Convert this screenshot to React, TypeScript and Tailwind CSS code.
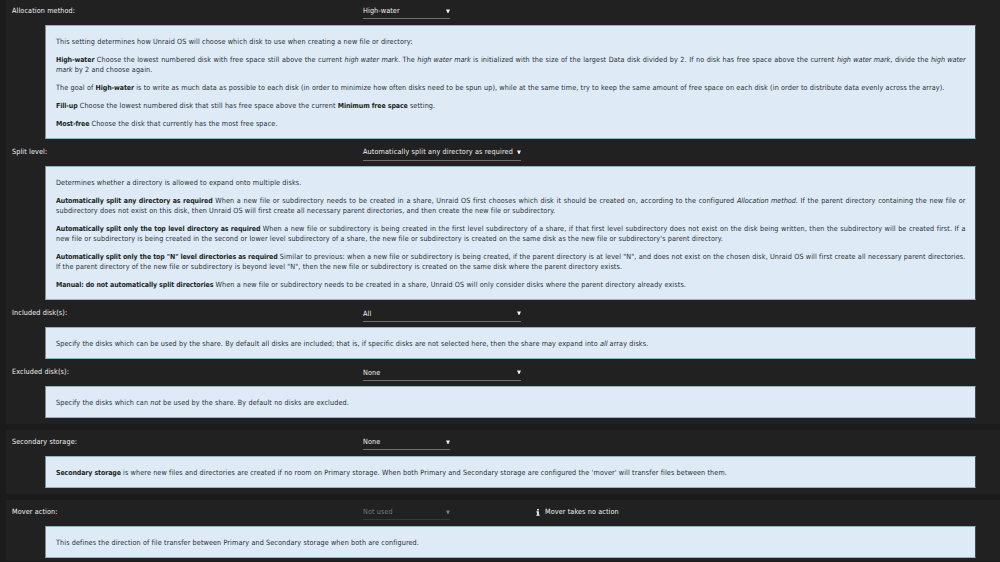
import type { ReactNode } from 'react';
import clsx from 'clsx';

type FieldProps = {
  label: string;
  value: string;
  wide?: boolean;
  disabled?: boolean;
  note?: string;
  rowClass: string;
  selectClass?: string;
  valueClass?: string;
  helpClass: string;
  children: ReactNode;
};

function Caret() {
  return (
    <svg width="4" height="5" viewBox="0 0 4 5" className="shrink-0 fill-current">
      <path d="M0 0.5h4L2.4 4h-0.8z" />
    </svg>
  );
}

function InfoIcon() {
  return (
    <svg width="4" height="7" viewBox="0 0 4 7" className="shrink-0 fill-current">
      <path d="M1.1 0h1.8v1.5H1.1zM0.4 2.3h2.5v3.4h0.8v1.1H0.3V5.7h0.8V3.4H0.4z" />
    </svg>
  );
}

function Field({ label, value, wide, disabled, note, rowClass, selectClass, valueClass, helpClass, children }: FieldProps) {
  return (
    <section>
      <div className={clsx('flex whitespace-nowrap pl-1.5 text-[#f2f2f2]', rowClass)}>
        <span className="w-[351px] shrink-0">{label}</span>
        <div
          className={clsx(
            'flex shrink-0 justify-between border-b',
            wide ? 'w-[158px]' : 'w-[87px]',
            disabled ? 'border-[#383838] text-[#7a7a7a]' : 'border-[#707070]',
            selectClass ?? 'h-3.5',
          )}
        >
          <span className={valueClass}>{value}</span>
          <span className="flex h-2.5 w-1 items-center">
            <Caret />
          </span>
        </div>
        {note && (
          <span className="ml-[86px] flex h-2.5 items-center gap-[5px]">
            <InfoIcon />
            {note}
          </span>
        )}
      </div>
      <div
        className={clsx(
          'ml-[39px] w-[931px] space-y-2 border border-y-[#93b3bd] border-l-[#7c8b92] border-r-[#3f4a50] bg-[#deebf7] pl-2.5 pr-[9.5px] pt-[10.6px] text-justify text-[#262b30]',
          helpClass,
        )}
      >
        {children}
      </div>
    </section>
  );
}

const B = ({ children }: { children: ReactNode }) => (
  <strong className="text-[7px] font-bold tracking-[-0.11px] text-[#1c1f22]">{children}</strong>
);

const I = ({ children }: { children: ReactNode }) => <em className="tracking-[-0.03px]">{children}</em>;

export default function App() {
  return (
    <main className="h-[562px] w-[1000px] overflow-hidden bg-[#1b1b1b] pl-1.5 font-['DejaVu_Sans_Condensed','DejaVu_Sans',sans-serif] text-[7.2px] leading-[10.1px] tracking-[0.11px]">
      <div className="h-[424px] bg-[#212121]">
        <Field label="Allocation method:" value="High-water" rowClass="h-[25px] pt-1.5" selectClass="h-[13px]" helpClass="h-[114px]">
          <p>This setting determines how Unraid OS will choose which disk to use when creating a new file or directory:</p>
          <p>
            <B>High-water</B> Choose the lowest numbered disk with free space still above the current <I>high water mark</I>. The <I>high water mark</I> is initialized with the size of the largest Data disk divided by 2. If no disk has free space above the current <I>high water mark</I>, divide the <I>high water mark</I> by 2 and choose again.
          </p>
          <p>
            The goal of <B>High-water</B> is to write as much data as possible to each disk (in order to minimize how often disks need to be spun up), while at the same time, try to keep the same amount of free space on each disk (in order to distribute data evenly across the array).
          </p>
          <p>
            <B>Fill-up</B> Choose the lowest numbered disk that still has free space above the current <B>Minimum free space</B> setting.
          </p>
          <p>
            <B>Most-free</B> Choose the disk that currently has the most free space.
          </p>
        </Field>

        <Field
          label="Split level:"
          value="Automatically split any directory as required"
          wide
          rowClass="h-[27px] pt-2"
          valueClass="tracking-[0.14px]"
          helpClass="h-[134px]"
        >
          <p>Determines whether a directory is allowed to expand onto multiple disks.</p>
          <p>
            <B>Automatically split any directory as required</B> When a new file or subdirectory needs to be created in a share, Unraid OS first chooses which disk it should be created on, according to the configured <I>Allocation method</I>. If the parent directory containing the new file or subdirectory does not exist on this disk, then Unraid OS will first create all necessary parent directories, and then create the new file or subdirectory.
          </p>
          <p>
            <B>Automatically split only the top level directory as required</B> When a new file or subdirectory is being created in the first level subdirectory of a share, if that first level subdirectory does not exist on the disk being written, then the subdirectory will be created first. If a new file or subdirectory is being created in the second or lower level subdirectory of a share, the new file or subdirectory is created on the same disk as the new file or subdirectory's parent directory.
          </p>
          <p>
            <B>Automatically split only the top "N" level directories as required</B> Similar to previous: when a new file or subdirectory is being created, if the parent directory is at level "N", and does not exist on the chosen disk, Unraid OS will first create all necessary parent directories. If the parent directory of the new file or subdirectory is beyond level "N", then the new file or subdirectory is created on the same disk where the parent directory exists.
          </p>
          <p>
            <B>Manual: do not automatically split directories</B> When a new file or subdirectory needs to be created in a share, Unraid OS will only consider disks where the parent directory already exists.
          </p>
        </Field>

        <Field label="Included disk(s):" value="All" wide rowClass="h-[27px] pt-2" valueClass="pt-px" helpClass="h-8">
          <p>
            Specify the disks which can be used by the share. By default all disks are included; that is, if specific disks are not selected here, then the share may expand into <I>all</I> array disks.
          </p>
        </Field>

        <Field label="Excluded disk(s):" value="None" wide rowClass="h-[27px] pt-2" valueClass="pt-px" helpClass="h-8">
          <p>
            Specify the disks which can <I>not</I> be used by the share. By default no disks are excluded.
          </p>
        </Field>
      </div>

      <div className="mt-1.5 h-16 bg-[#212121]">
        <Field label="Secondary storage:" value="None" rowClass="h-[26px] pt-[7px]" selectClass="h-[13px]" helpClass="h-8">
          <p>
            <B>Secondary storage</B> is where new files and directories are created if no room on Primary storage. When both Primary and Secondary storage are configured the 'mover' will transfer files between them.
          </p>
        </Field>
      </div>

      <div className="mt-1.5 h-[61px] bg-[#212121]">
        <Field label="Mover action:" value="Not used" disabled note="Mover takes no action" rowClass="h-[26px] pt-[7px]" selectClass="h-[13px]" helpClass="h-8">
          <p>This defines the direction of file transfer between Primary and Secondary storage when both are configured.</p>
        </Field>
      </div>
    </main>
  );
}
